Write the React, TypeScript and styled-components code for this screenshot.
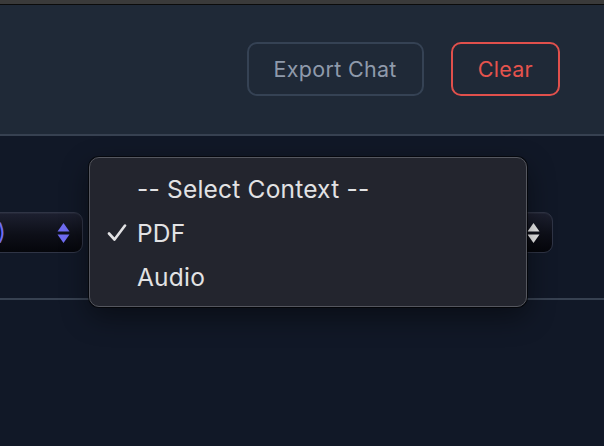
import React from "react";
import styled, { createGlobalStyle } from "styled-components";

const Global = createGlobalStyle`
  html, body { margin: 0; padding: 0; background: #111827; }
  body { font-family: Inter, "Noto Sans", sans-serif; overflow: hidden; }
  * { box-sizing: border-box; }
`;

const Page = styled.div`
  position: relative;
  width: 604px;
  height: 446px;
  overflow: hidden;
  background: #111827;
  display: flex;
  flex-direction: column;
`;

const Chrome = styled.div`
  height: 5px;
  background: #3a3a3a;
  border-bottom: 1px solid #0b0b0b;
  flex-shrink: 0;
`;

const Header = styled.header`
  height: 131px;
  flex-shrink: 0;
  background: #1f2937;
  border-bottom: 2px solid #374151;
  display: flex;
  align-items: center;
  justify-content: flex-end;
  gap: 27px;
  padding: 0 44px 2px 0;
`;

const Button = styled.button<{ $danger?: boolean }>`
  height: 54px;
  padding: 0 25px;
  border-radius: 10px;
  background: transparent;
  border: 2px solid ${(p) => (p.$danger ? "#e0504c" : "#354254")};
  color: ${(p) => (p.$danger ? "#e5534d" : "#8f9aab")};
  font-family: Inter, "Noto Sans", sans-serif;
  font-size: 21.5px;
  letter-spacing: 0.3px;
  cursor: pointer;
`;

const Controls = styled.section`
  height: 164px;
  flex-shrink: 0;
  border-bottom: 2px solid #374151;
  display: flex;
  align-items: flex-start;
  justify-content: flex-end;
  gap: 12px;
  padding: 76px 51px 0 0;
  overflow: hidden;
`;

const Select = styled.div<{ $w: number; $accent: string; $gap: number }>`
  flex-shrink: 0;
  width: ${(p) => p.$w}px;
  height: 41px;
  border-radius: 9px;
  border: 1.5px solid #2f3445;
  background: linear-gradient(180deg, #1d2030 0%, #0d0f18 55%, #05060b 100%);
  display: flex;
  align-items: center;
  justify-content: flex-end;
  gap: ${(p) => p.$gap}px;
  padding: 0 12px 0 14px;
  overflow: hidden;
  color: ${(p) => p.$accent};
  font-family: Inter, "Noto Sans", sans-serif;
  font-size: 23px;
  white-space: nowrap;
  box-shadow: inset 0 1px 0 rgba(255, 255, 255, 0.04);
`;

const Stepper = styled.svg`
  flex-shrink: 0;
  width: 13px;
  height: 22px;
`;

const Body = styled.main`
  flex: 1;
  background: #111827;
`;

const Menu = styled.div`
  position: absolute;
  left: 89px;
  top: 157px;
  width: 438px;
  height: 150px;
  border-radius: 10px;
  border: 1.5px solid #55575f;
  background: #23252e;
  box-shadow: 0 0 0 1px rgba(0, 0, 0, 0.6), 0 10px 28px rgba(0, 0, 0, 0.45);
  padding: 9px 0 0 0;
  display: flex;
  flex-direction: column;
`;

const Item = styled.div`
  height: 44px;
  display: flex;
  align-items: center;
  color: #e2e2e4;
  font-family: Inter, "Noto Sans", sans-serif;
  font-size: 24.5px;
  letter-spacing: 0.2px;
`;

const Check = styled.span`
  width: 47px;
  padding-left: 17px;
  display: flex;
  align-items: center;
`;

function Arrows({ color }: { color: string }) {
  return (
    <Stepper viewBox="0 0 13 22">
      <path d="M6.5 1 L12.5 9.5 L0.5 9.5 Z" fill={color} />
      <path d="M6.5 21 L12.5 12.5 L0.5 12.5 Z" fill={color} />
    </Stepper>
  );
}

const options = ["-- Select Context --", "PDF", "Audio"];

export default function App() {
  return (
    <>
      <Global />
      <Page>
        <Chrome />
        <Header>
          <Button>Export Chat</Button>
          <Button $danger>Clear</Button>
        </Header>
        <Controls>
          <Select $w={180} $gap={51} $accent="#6f6cf2">
            <span>Llama 3 (8B)</span>
            <Arrows color="#6f6cf2" />
          </Select>
          <Select $w={336} $gap={12} $accent="#e5e7eb">
            <span>PDF</span>
            <Arrows color="#e5e7eb" />
          </Select>
          <Select $w={110} $gap={12} $accent="#e5e7eb">
            <span>Off</span>
            <Arrows color="#eeeeee" />
          </Select>
        </Controls>
        <Body />
        <Menu>
          {options.map((o) => (
            <Item key={o}>
              <Check>
                {o === "PDF" && (
                  <svg width="20" height="18" viewBox="0 0 20 18">
                    <path d="M2 9.5 L7.5 15.5 L18 1.5" fill="none" stroke="#e2e2e4" strokeWidth="2.6" strokeLinecap="round" strokeLinejoin="round" />
                  </svg>
                )}
              </Check>
              {o}
            </Item>
          ))}
        </Menu>
      </Page>
    </>
  );
}
